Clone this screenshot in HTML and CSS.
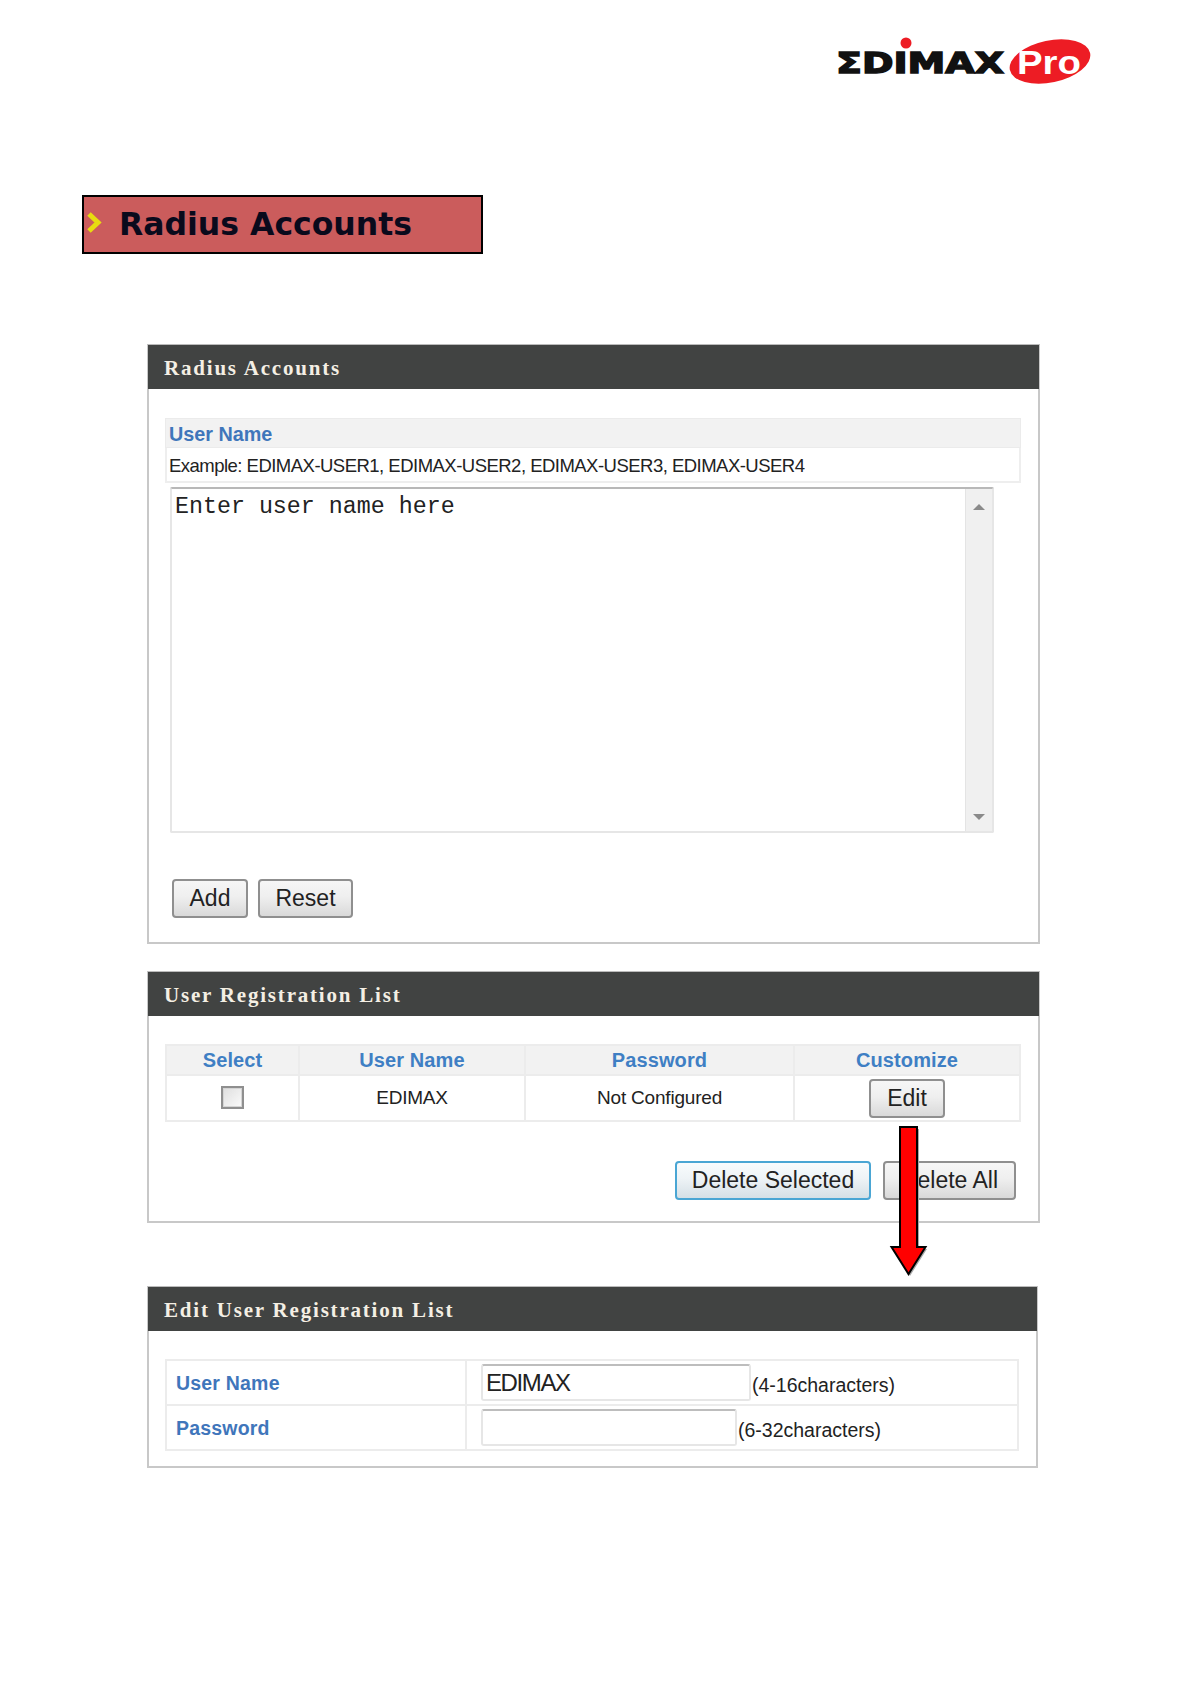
FILE: index.html
```html
<!DOCTYPE html>
<html lang="en">
<head>
<meta charset="utf-8">
<title>Radius Accounts</title>
<link rel="stylesheet" href="styles.css">
</head>
<body>
<div class="page">
  <header class="logo-row">
    <svg class="logo" width="256" height="52" viewBox="0 0 256 52">
      <text class="logo-word" x="0" y="37" textLength="168" lengthAdjust="spacingAndGlyphs">ΣDIMAX</text>
      <circle cx="70" cy="7" r="5.5" fill="#ed1c24"/>
      <ellipse cx="214" cy="25.500" rx="41" ry="21" fill="#ed1c24" transform="rotate(-12 214 25.500)"/>
      <text class="logo-pro" x="181" y="38" textLength="64" lengthAdjust="spacingAndGlyphs">Pro</text>
    </svg>
  </header>

  <div class="banner">
    <svg class="chevron" width="17" height="23" viewBox="0 0 17 23"><path d="M3 3L12 11.500L3 20" fill="none" stroke="#e8dc10" stroke-width="5"/></svg>
    <span class="banner-text">Radius Accounts</span>
  </div>

  <section class="panel panel-first">
    <h2 class="panel-title">Radius Accounts</h2>
    <div class="panel-body">
      <div class="field-label">User Name</div>
      <div class="field-help">Example: EDIMAX-USER1, EDIMAX-USER2, EDIMAX-USER3, EDIMAX-USER4</div>
      <div class="textarea">
        <div class="textarea-text">Enter user name here</div>
        <div class="scrollbar"><span class="arrow-up"></span><span class="arrow-down"></span></div>
      </div>
      <div class="actions">
        <button class="btn btn-add" type="button">Add</button>
        <button class="btn btn-reset" type="button">Reset</button>
      </div>
    </div>
  </section>

  <section class="panel panel-second">
    <h2 class="panel-title">User Registration List</h2>
    <div class="panel-body">
      <table class="list">
        <tr>
          <th class="col-select">Select</th>
          <th class="col-name">User Name</th>
          <th class="col-pass">Password</th>
          <th>Customize</th>
        </tr>
        <tr>
          <td><span class="checkbox"></span></td>
          <td>EDIMAX</td>
          <td>Not Configured</td>
          <td><button class="btn btn-edit" type="button">Edit</button></td>
        </tr>
      </table>
      <div class="actions actions-right">
        <button class="btn btn-selected" type="button">Delete Selected</button>
        <button class="btn btn-all" type="button">Delete All</button>
      </div>
    </div>
  </section>

  <section class="panel panel-third">
    <h2 class="panel-title">Edit User Registration List</h2>
    <div class="panel-body">
      <table class="edit">
        <tr>
          <th class="edit-label">User Name</th>
          <td><div class="edit-cell"><span class="input input-name">EDIMAX</span><span class="hint">(4-16characters)</span></div></td>
        </tr>
        <tr>
          <th class="edit-label">Password</th>
          <td><div class="edit-cell"><span class="input input-pass"></span><span class="hint">(6-32characters)</span></div></td>
        </tr>
      </table>
    </div>
  </section>

  <svg class="red-arrow" width="44" height="154" viewBox="0 0 44 154">
    <path class="arrow-shadow" d="M14 3H31V123H39L22 150L6 123H14Z"/>
    <path class="arrow-fill" d="M12 1H29V121H37.500L20.500 148L3.500 121H12Z"/>
  </svg>
</div>
</body>
</html>
```

FILE: styles.css
```css
* { box-sizing: border-box; }
html, body { margin: 0; padding: 0; background: #fff; }
.page {
  position: relative;
  width: 1190px;
  height: 1684px;
  font-family: "Liberation Sans", Arial, sans-serif;
  color: #222;
  overflow: hidden;
}
.logo-row {
  display: flex;
  justify-content: flex-end;
  height: 195px;
  padding: 36px 98px 0 0;
}
.logo { display: block; }
.logo-word {
  font-family: "DejaVu Sans", sans-serif;
  font-weight: 700;
  font-size: 28px;
  fill: #111;
  stroke: #111;
  stroke-width: 1.4px;
}
.logo-pro {
  font-family: "Liberation Sans", sans-serif;
  font-weight: 700;
  font-size: 34px;
  fill: #fff;
}
.banner {
  display: flex;
  align-items: center;
  width: 401px;
  height: 59px;
  margin-left: 82px;
  background: #cb5c5c;
  border: 2px solid #000;
}
.chevron { flex: none; margin: -4px 16px 0 2px; }
.banner-text {
  color: #0a0a1c;
  font: 700 31.500px "DejaVu Sans", sans-serif;
  margin-top: -2px;
}
.panel {
  width: 893px;
  margin-left: 147px;
  border: 2px solid #c8c8c8;
  border-top-color: #bbb;
}
.panel-first { margin-top: 90px; height: 600px; }
.panel-second { margin-top: 27px; height: 252px; }
.panel-third { margin-top: 63px; width: 891px; height: 182px; }
.panel-title {
  height: 44px;
  margin: -1px -1px 0;
  padding: 10px 0 0 16px;
  background: #414342;
  color: #f4efe4;
  font: 700 21px/26px "Liberation Serif", serif;
  letter-spacing: 1.8px;
}
.panel-body { padding: 0 15px 0 16px; }
.panel-first .panel-body { padding-top: 29px; }
.panel-second .panel-body { padding-top: 28px; }
.panel-third .panel-body { padding-top: 28px; }
.field-label {
  width: 856px;
  height: 30px;
  padding: 2px 3px 0;
  background: #f2f2f2;
  border: 1px solid #ebebeb;
  color: #3f76bb;
  font: 700 19.800px/26px "Liberation Sans", sans-serif;
}
.field-help {
  width: 856px;
  height: 35px;
  padding: 2px 2px 0;
  border: 2px solid #eee;
  border-top: 0;
  color: #222;
  font-size: 18.500px;
  line-height: 32px;
  letter-spacing: -.52px;
  white-space: nowrap;
}
.textarea {
  display: flex;
  justify-content: space-between;
  width: 824px;
  height: 346px;
  margin: 4px 0 0 5px;
  border: 2px solid #e6e6e6;
  border-top-color: #b8b8b8;
  border-radius: 2px;
}
.textarea-text {
  padding: 3px 0 0 3px;
  color: #222;
  font: 23.300px/30px "Liberation Mono", monospace;
}
.scrollbar {
  position: relative;
  width: 27px;
  background: #f0f0f0;
  border-left: 1px solid #e4e4e4;
}
.arrow-up, .arrow-down {
  position: absolute;
  left: 7px;
  width: 0;
  height: 0;
  border-left: 6px solid transparent;
  border-right: 6px solid transparent;
}
.arrow-up { top: 15px; border-bottom: 6px solid #8a8a8a; }
.arrow-down { bottom: 11px; border-top: 6px solid #8a8a8a; }
.actions { display: flex; gap: 10px; margin: 46px 0 0 7px; }
.actions-right { justify-content: flex-end; gap: 12px; margin: 39px 7px 0 0; }
.btn {
  display: block;
  height: 39px;
  padding: 0;
  background: linear-gradient(#f6f6f6 0%, #efefef 45%, #d9d9d9 100%);
  border: 2px solid #8f8f8f;
  border-radius: 4px;
  color: #222;
  font: 23px "Liberation Sans", sans-serif;
}
.btn-add { width: 76px; }
.btn-reset { width: 95px; }
.btn-edit { width: 76px; margin: 0 auto; }
.btn-selected {
  width: 196px;
  border-color: #4aa6d4;
  background: linear-gradient(#f8fbfd 0%, #eef3f6 45%, #d5e0e6 100%);
}
.btn-all { width: 133px; }
table { border-collapse: collapse; table-layout: fixed; }
.list { width: 856px; }
.list th, .list td { border: 2px solid #ececec; padding: 0; text-align: center; }
.list th {
  height: 30px;
  background: #f2f2f2;
  color: #3f7fc4;
  font: 700 20px/26px "Liberation Sans", sans-serif;
  letter-spacing: .1px;
}
.list td { height: 46px; font-size: 19px; letter-spacing: -.2px; }
.col-select { width: 133px; }
.col-name { width: 226px; }
.col-pass { width: 269px; }
.checkbox {
  display: block;
  width: 23px;
  height: 23px;
  margin: 0 auto 1px 54px;
  background: linear-gradient(135deg, #dedede, #fbfbfb);
  border: 2px solid #8f8f8f;
  box-shadow: inset 0 0 0 1px #d4d4d4;
}
.edit { width: 854px; }
.edit th, .edit td { border: 2px solid #ececec; height: 45px; padding: 0; }
.edit-label {
  width: 300px;
  padding-left: 9px !important;
  color: #3f76bb;
  font: 700 19.500px/26px "Liberation Sans", sans-serif;
  text-align: left;
  letter-spacing: .2px;
}
.edit-cell { display: flex; align-items: center; padding-left: 14px; }
.input {
  display: block;
  flex: none;
  height: 37px;
  padding-left: 3px;
  background: #fff;
  border: 2px solid #e6e6e6;
  border-top-color: #bdbdbd;
  border-radius: 3px;
  color: #222;
  font: 24px/33px "Liberation Sans", sans-serif;
  letter-spacing: -1.4px;
}
.input-name { width: 270px; }
.input-pass { width: 256px; }
.hint { padding: 5px 0 0 1px; color: #222; font-size: 19.500px; }
.red-arrow { position: absolute; left: 888px; top: 1126px; }
.arrow-shadow { fill: #a8a8a8; }
.arrow-fill { fill: #ff0000; stroke: #000; stroke-width: 2; }
```
